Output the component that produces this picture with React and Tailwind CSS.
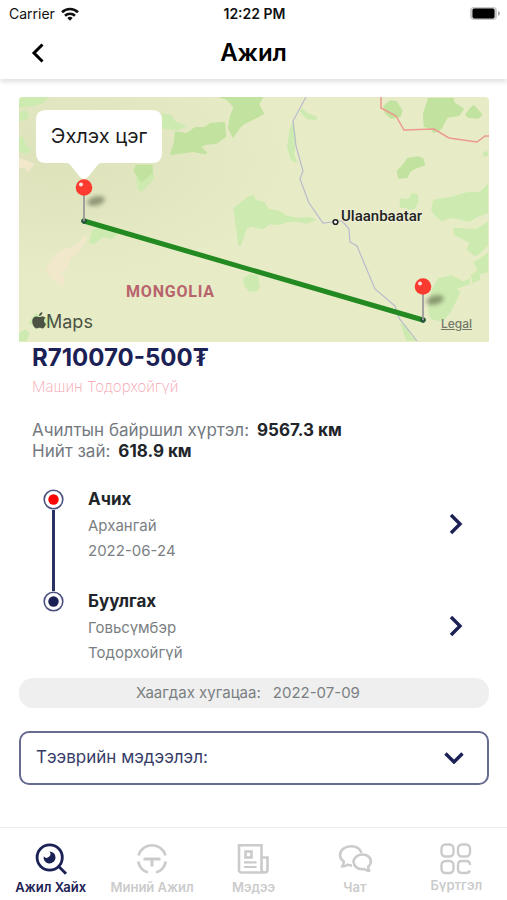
import { useState } from 'react';
import clsx from 'clsx';

const NAVY = '#1b2155';

const STOPS = [
  { id: 'load',   title: 'Ачих',    place: 'Архангай',  date: '2022-06-24' },
  { id: 'unload', title: 'Буулгах', place: 'Говьсүмбэр', date: 'Тодорхойгүй' },
];

const TABS = [
  { id: 'search',   label: 'Ажил Хайх',  Icon: SearchEyeIcon },
  { id: 'mine',     label: 'Миний Ажил', Icon: SteeringIcon },
  { id: 'news',     label: 'Мэдээ',      Icon: NewsIcon },
  { id: 'chat',     label: 'Чат',        Icon: ChatIcon },
  { id: 'register', label: 'Бүртгэл',    Icon: GridIcon },
];

export default function App() {
  const [tab,  setTab]  = useState('search');
  const [open, setOpen] = useState(false);

  return (
    <div className="flex min-h-screen flex-col bg-white font-['Inter','Noto_Sans',sans-serif] text-[#212529]">
      <StatusBar />
      <Header title="Ажил" />

      <main className="flex-1 pt-[18px] pr-[18px] pl-[19px]">
        <RouteMap />

        <section className="px-[13px]">
          <h2 className="text-2xl leading-8 font-bold text-[#1b2155]">R710070-500₮</h2>
          <p className="text-[15px] leading-[26px] font-extralight text-[#f5a3b0]">Машин Тодорхойгүй</p>
          <dl className="mt-5 text-[17px] leading-[21px]">
            <div className="flex gap-2">
              <dt className="text-[#74797f]">Ачилтын байршил хүртэл:</dt>
              <dd className="font-bold">9567.3 км</dd>
            </div>
            <div className="flex gap-2">
              <dt className="text-[#74797f]">Нийт зай:</dt>
              <dd className="font-bold">618.9 км</dd>
            </div>
          </dl>
        </section>

        <ul className="mt-[23px] pr-[23px] pl-6">
          {STOPS.map((stop, i) => (
            <Stop key={stop.id} stop={stop} first={i === 0} last={i === STOPS.length - 1} />
          ))}
        </ul>

        <div className="mt-px flex h-[30px] items-center justify-center gap-3 rounded-[14px] bg-[#efefef] pr-3 text-[15px] text-[#7b7f83]">
          <span>Хаагдах хугацаа:</span>
          <span>2022-07-09</span>
        </div>

        <button onClick={() => setOpen(!open)} aria-expanded={open}
          className="mt-[23px] flex h-[54px] w-full items-center justify-between rounded-[10px] border-2 border-[#676b8f] pr-[23px] pl-[15px] text-[17px] text-[#373c68]">
          Тээврийн мэдээлэл:
          <svg viewBox="0 0 20 12" className={clsx('h-3 w-5', open && 'rotate-180')} fill="none" stroke={NAVY} strokeWidth="3.4">
            <path d="M1.5 1.5 10 10l8.5-8.5" />
          </svg>
        </button>
      </main>

      <nav className="grid grid-cols-5 border-t border-[#ececec] pt-[15px] pb-[5px]">
        {TABS.map(({ id, label, Icon }) => (
          <button key={id} onClick={() => setTab(id)}
            className={clsx('flex flex-col items-center text-[13px] leading-4 font-semibold whitespace-nowrap',
              id === 'register' ? 'gap-0.5' : 'gap-1',
              tab === id ? 'text-[#1b2155]' : 'text-[#cbcbcb]')}>
            <Icon />
            {label}
          </button>
        ))}
      </nav>
    </div>
  );
}

function StatusBar() {
  return (
    <div className="grid h-[27px] grid-cols-3 items-center pr-[7px] pl-[9px] text-[#111]">
      <div className="flex items-center gap-1.5 text-sm">
        Carrier
        <svg viewBox="0 0 18 14" className="h-3.5 w-[18px]" fill="none" stroke="#111" strokeWidth="2.6">
          <path d="M1 5.2a11.5 11.5 0 0 1 16 0" />
          <path d="M4 8.7a7.2 7.2 0 0 1 10 0" />
          <path d="M9 13.8 6.3 11a4 4 0 0 1 5.4 0z" fill="#111" stroke="none" />
        </svg>
      </div>
      <div className="text-center text-sm font-semibold">12:22 PM</div>
      <svg viewBox="0 0 31 15" className="h-[15px] w-[31px] justify-self-end">
        <rect x="1" y="1" width="27" height="13" rx="4" fill="#c9c9c9" />
        <rect x="3.5" y="2.5" width="22" height="10" rx="2" fill="#000" />
        <path d="M29 5v5q2-.8 2-2.5T29 5z" fill="#a8a8a8" />
      </svg>
    </div>
  );
}

function Header({ title }) {
  return (
    <header className="grid h-[52px] grid-cols-[1fr_auto_1fr] items-center px-[30px] shadow-[0_3px_5px_rgba(0,0,0,0.12)]">
      <button aria-label="Буцах" className="justify-self-start">
        <svg viewBox="0 0 16 20" className="h-5 w-4" fill="none" stroke="#000" strokeWidth="3">
          <path d="M12.5 1.5 4 10l8.5 8.5" />
        </svg>
      </button>
      <h1 className="text-2xl font-semibold text-black">{title}</h1>
    </header>
  );
}

function RouteMap() {
  return (
    <div className="relative">
      <svg viewBox="0 0 470 245" className="block w-full rounded-t-sm">
        <defs>
          <radialGradient id="land" cx="0.08" cy="0.25" r="0.5">
            <stop offset="0" stopColor="#dee2bb" />
            <stop offset="1" stopColor="#e7ecc7" />
          </radialGradient>
          <filter id="soft" x="-50%" y="-50%" width="200%" height="200%">
            <feGaussianBlur stdDeviation="2.2" />
          </filter>
        </defs>
        <rect width="470" height="245" fill="url(#land)" />

        {/* terrain, drawn at three times the map's scale */}
        <g transform="scale(0.3333) translate(-12 -12)">
          <g fill="#cdebb0">
            <path d="M12 12h90l-20 20-30 8-40 5z" />
            <path d="M440 60l30 5 10 20 35 15-25 12-50-5z" />
            <path d="M12 60l20-10 12 15-8 15-24 5z" />
            <path d="M12 135l12-5 8 25 16 15-8 12-28-4z" />
            <path d="M362 240l50-25 2 25 5 15-38 42-12-5z" />
            <path d="M655 345l45-35 15-4 8 15 25 5 14 22 30 5 25 15 28 6 40-2 20 8-30 12-35-6-25 2-22 8-28-2-20 14-35-6-14 5-18 52-8 0z" />
            <path d="M836 80l8 60-6 45 10 27-20-10-12-40 8-55z" />
            <path d="M860 45l18 15 30 12-5 10-28-4-20-22z" />
            <path d="M1155 315l25 3 10-18 18 3 3 25-12 20-20 2-5-5-20 0z" />
            <path d="M1255 320l60-10 40-12 40-2 25-25v90l-35 12-20 14-35-8-20-4-30 10-18-15-14-20z" />
            <path d="M1315 405l70 2 35-22v70l-22 25-18 10-25-20 8-20-22-12-24-12z" />
            <path d="M1420 478v60l-25 5 0 18-22 10-6-25 20-14-12-25 20-12z" />
            <path d="M1250 590l20-35 40-8 35 18 20-10 0 18-40 15 12 10-15 30-15 30-25 28-35-8-8-25z" />
            <path d="M685 555l20-12 25 5 5 35-10 12-22 2-16-20z" />
            <path d="M232 410l20-12 12 8 36 5 8 12-18 16-25-6-30 20-14-2z" />
            <path d="M1155 690l20 8 12 28 22 18h-35z" />
            <path d="M40 690l22-30 18 10 35 5-6 25-40 8z" />
            <path d="M12 720l20-12 12 15-10 22H12z" />
            <path d="M1405 178l15-5v15l-15 4z" />
          </g>
          <g fill="#c2e2a0">
            <path d="M480 115l35 5 25-18 30 0 15-12 45-4 4 45-30 22-30 2-15 6 18 18-5 5-38-7-25 4-45 5 12-35z" />
            <path d="M610 12h135l-12 22 15 28-20 12-40 20-12 10-22 32-15-30 6-38 10-25-20-22z" />
            <path d="M362 215h50l2 25-12 10-22 20-14-20-10-15z" />
            <path d="M1145 235l22-25 10-15 30-5 18 5 6 22-30 10-15 10-8 18-28 2z" />
            <path d="M1240 14h75l5 15 28 18-15 22-35 5-18 35-24 12-8-12-22-8-2-40z" />
            <path d="M1350 65l15-20 12-10 26 30-12 12-30-2z" />
            <path d="M1105 40l20-18 20 2 18 30-6 18-30 6-18-18z" />
          </g>
          <g fill="#f1e7cb">
            <path d="M90 530l18-28 12-20 25-12 30-8 20-18 15-15 8 8-20 28-18 22-15 12-6 25-20 15 10 15-6 31-22-18-10-12z" />
            <path d="M12 195l25 8 22 10-20 25-10-12-17-2z" />
          </g>
        </g>

        {/* border and roads */}
        <path d="M362 0v11l15 8 8 14 30-1 15 9 28 4 8-6h4" fill="none" stroke="#eb9a8d" strokeWidth="1.5" />
        <path d="M287 0l-13 24 3 25 7 25-3 8 9 24 14 20 9-1 10-1 7 8 1 13 7 4 18 43 20 17 4 12 18 23"
          fill="none" stroke="#b9bacb" strokeWidth="1.2" />

        {/* route */}
        <path d="M65 124 404 223" stroke="#238a22" strokeWidth="5" strokeLinecap="round" />

        <circle cx="316.5" cy="125" r="2.3" fill="#fff" stroke="#222" strokeWidth="1.6" />
        <text x="322" y="124" fontSize="15" fontWeight="500" fill="#222" stroke="#eef0d6" strokeWidth="2" paintOrder="stroke" fontFamily="Roboto, sans-serif">Ulaanbaatar</text>
        <text x="107" y="200" fontSize="16" fontWeight="700" className="tracking-wider" fill="#b8636b" fontFamily="Roboto, sans-serif">MONGOLIA</text>

        <Pin x={65} y={124} />
        <Pin x={404} y={223} />

        {/* callout */}
        <path d="M27 13h106q10 0 10 10v33q0 10-10 10H82q-2 0-5 4l-8 10q-4 4-8 0l-8-10q-3-4-5-4H27q-10 0-10-10V23q0-10 10-10z" fill="#fff" />
        <text x="80" y="46" textAnchor="middle" fontSize="20" fill="#1c1c1c">Эхлэх цэг</text>

        {/* map credit */}
        <g fill="#4c5244">
          <path d="M20.5 220c1.5 0 2.5-1 4-.4 1 .3 1.6.9 2 1.5-2.2 1.4-2 4.6.5 5.7-.6 2-2 4.6-3.5 4.6-1.2 0-1.600-.6-3-.6s-1.900.6-3 .6c-2 0-4.300-4-4.300-7.200 0-3 2-4.700 4-4.700 1.400 0 2.300.5 3.300.5z" />
          <path d="M20 219c0-2 1.500-3.700 3.400-4 .2 2.200-1.400 4-3.400 4z" />
          <text x="27" y="231" fontSize="18">Maps</text>
        </g>
      </svg>
      <a href="#legal" className="absolute right-[17px] bottom-2.5 text-xs font-medium text-[#73786a] underline">Legal</a>
    </div>
  );
}

function Pin({ x, y }) {
  return (
    <g transform={`translate(${x} ${y})`}>
      <ellipse cx="12" cy="-20" rx="9" ry="4.5" fill="#5b6247" opacity="0.6" transform="rotate(-14 12 -20)" filter="url(#soft)" />
      <circle r="2.3" fill="#33604a" stroke="#1f4a33" />
      <path d="M0-28V0" stroke="#9a9a9a" strokeWidth="1.8" />
      <circle cy="-33.5" r="8.3" fill="#fb3a30" />
      <circle cx="-3" cy="-36.5" r="2" fill="#ffe1dd" />
    </g>
  );
}

function Stop({ stop, first, last }) {
  return (
    <li className="flex">
      <div className="flex w-[21px] flex-col items-center pt-1">
        <svg viewBox="0 0 21 21" className="size-[21px] shrink-0">
          <circle cx="10.5" cy="10.5" r="9.3" fill="#fff" stroke="#4b5080" strokeWidth="1.6" />
          <circle cx="10.5" cy="10.5" r="5.2" fill={first ? '#f90505' : NAVY} />
        </svg>
        {!last && <span className="-mb-1 w-[3px] flex-1 bg-[#2b3163]" />}
      </div>
      <div className={clsx('ml-6 flex-1 text-[15px] leading-[25px] text-[#7b7f83]', last ? 'pb-3' : 'pb-6')}>
        <h3 className="pt-0.5 pb-px text-[17px] font-bold text-[#212529]">{stop.title}</h3>
        <p>{stop.place}</p>
        <p>{stop.date}</p>
      </div>
      <button aria-label={stop.title} className="mt-[29px] flex size-5 items-center justify-center">
        <svg viewBox="0 0 14 22" className="h-[22px] w-3.5 shrink-0" fill="none" stroke={NAVY} strokeWidth="3.4">
          <path d="M2 2l9 9-9 9" />
        </svg>
      </button>
    </li>
  );
}

function SearchEyeIcon() {
  return (
    <svg viewBox="0 0 32 32" className="size-8" fill="none" stroke="currentColor" strokeWidth="2.8">
      <circle cx="14.7" cy="14.5" r="12.6" />
      <path d="M23.5 23.3l7.5 7.5" />
      <path d="M14.5 8.5a6 6 0 1 1-5.8 4.8 3 3 0 1 0 5.8-4.8z" fill="currentColor" stroke="none" />
    </svg>
  );
}

function SteeringIcon() {
  return (
    <svg viewBox="0 0 32 32" className="size-8" fill="none" stroke="currentColor" strokeWidth="2.6">
      <path d="M2.5 12.5a14 14 0 0 1 27 0" />
      <path d="M2.3 18.5A14 14 0 0 0 12 29.5" />
      <path d="M29.7 18.5A14 14 0 0 1 20 29.5" />
      <path d="M7.5 16h17M16 16v7.500" strokeWidth="3" />
    </svg>
  );
}

function NewsIcon() {
  return (
    <svg viewBox="0 0 32 32" className="size-8" fill="none" stroke="currentColor" strokeWidth="2.6">
      <path d="M28 29.5H4.5Q2 29.5 2 27V2.200h22.500V26.500q0 3 3 3t3-3V14.500h-6" />
      <rect x="8.5" y="8.5" width="6" height="6" />
      <path d="M7 19.3h12.5M7 24h12.5" strokeWidth="2.2" />
    </svg>
  );
}

function ChatIcon() {
  return (
    <svg viewBox="0 0 34 32" className="h-8 w-[34px]" fill="none" stroke="currentColor" strokeWidth="2.6" strokeLinejoin="round">
      <path d="M14 22.5q-2 .1-4.5-.9Q7.500 23.500 4 23.500q2-2.500 1.800-5Q2 16 2 12.200C2 7 7 3.200 13 3.200c5 0 9 2.500 10.500 6.600" />
      <path d="M24.5 11.5c5 0 8.3 3.200 8.300 7 0 2.500-1.300 4.200-2.600 5.200q0 2.200 1 4.200-2.700 0-4.700-1.800-9.500 1.300-11-7c0-4.300 4-7.600 9-7.600z" />
    </svg>
  );
}

function GridIcon() {
  return (
    <svg viewBox="0 0 32 32" className="size-8" fill="none" stroke="currentColor" strokeWidth="2.4">
      <rect x="1.5" y="1.5" width="12" height="12" rx="4" />
      <rect x="18" y="1.5" width="12" height="12" rx="4" />
      <rect x="1.5" y="18" width="12" height="12" rx="4" />
      <path d="M30 22q0-4-4-4h-4q-4 0-4 4v4q0 4 4 4h4q3 0 4-2.500" />
    </svg>
  );
}
